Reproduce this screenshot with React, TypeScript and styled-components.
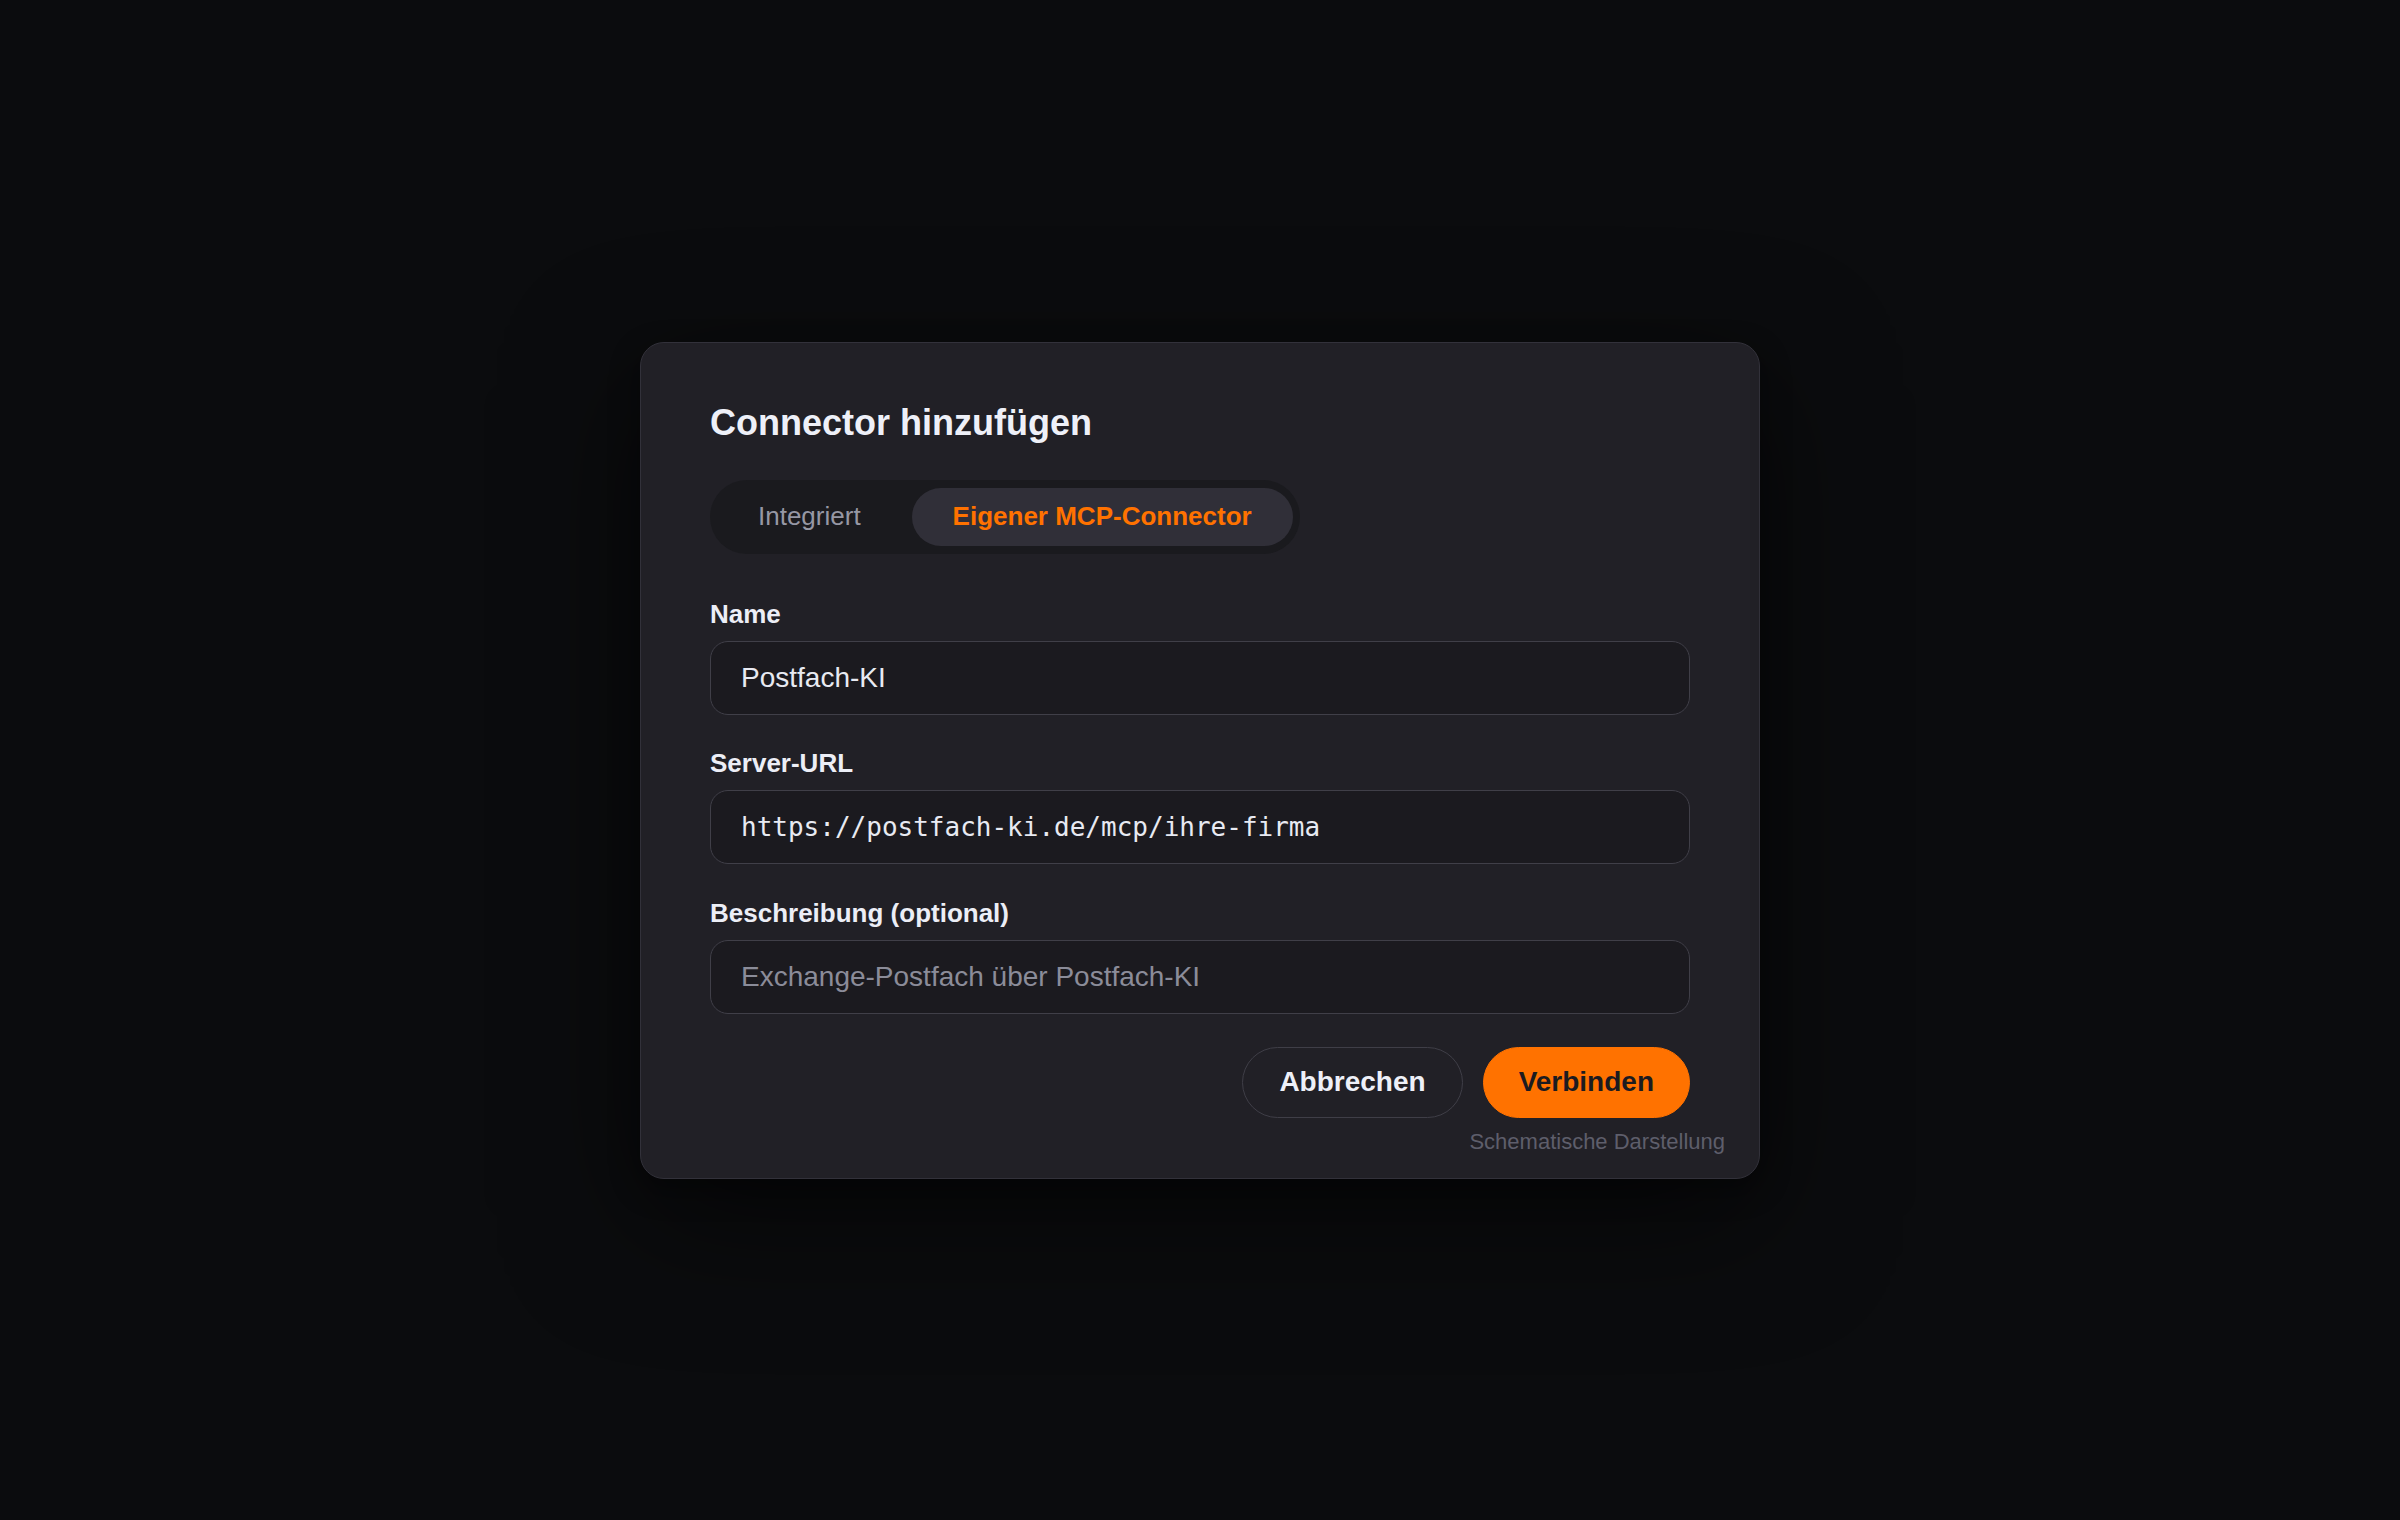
import React from "react";
import styled, { createGlobalStyle } from "styled-components";

const GlobalStyle = createGlobalStyle`
  html, body {
    margin: 0;
    padding: 0;
    background: #0b0c0e;
  }
  * { box-sizing: border-box; }
`;

const Page = styled.main`
  min-height: 100vh;
  display: flex;
  align-items: center;
  justify-content: center;
  background: #0b0c0e;
  font-family: "Liberation Sans", Arial, sans-serif;
`;

const Dialog = styled.section`
  position: relative;
  width: 1120px;
  padding: 58px 69px 60px;
  background: #212026;
  border: 1px solid #32313a;
  border-radius: 24px;
  box-shadow: 0 40px 130px rgba(0, 0, 0, 0.55), 0 10px 30px rgba(0, 0, 0, 0.35);
  display: flex;
  flex-direction: column;
`;

const Title = styled.h2`
  margin: 0;
  font-size: 36px;
  line-height: 44px;
  font-weight: 700;
  color: #eef0f8;
`;

const Tabs = styled.div`
  margin-top: 35px;
  align-self: flex-start;
  display: flex;
  gap: 10px;
  padding: 8px 7px;
  background: #1a1a1e;
  border-radius: 999px;
`;

const Tab = styled.button<{ $active?: boolean }>`
  height: 58px;
  padding: 0 41px;
  border: none;
  border-radius: 999px;
  font-family: inherit;
  font-size: 26px;
  font-weight: ${(p) => (p.$active ? 700 : 400)};
  color: ${(p) => (p.$active ? "#ff7200" : "#9697a4")};
  background: ${(p) => (p.$active ? "#302f38" : "transparent")};
  cursor: pointer;
`;

const Form = styled.div`
  margin-top: 45px;
  display: flex;
  flex-direction: column;
  gap: 33.5px;
`;

const Field = styled.label`
  display: flex;
  flex-direction: column;
  gap: 12px;
`;

const LabelText = styled.span`
  font-size: 26px;
  line-height: 30px;
  font-weight: 700;
  color: #eceef6;
`;

const Input = styled.input<{ $mono?: boolean }>`
  width: 100%;
  height: 74px;
  padding: 0 30px;
  background: #1b1a1f;
  border: 1px solid #403f48;
  border-radius: 18px;
  outline: none;
  color: #e8eaf2;
  font-family: ${(p) =>
    p.$mono ? '"DejaVu Sans Mono", "Liberation Mono", monospace' : '"Liberation Sans", Arial, sans-serif'};
  font-size: ${(p) => (p.$mono ? "26px" : "28px")};

  &::placeholder {
    color: #8b8c99;
    opacity: 1;
  }
`;

const Actions = styled.div`
  margin-top: 33px;
  display: flex;
  justify-content: flex-end;
  gap: 20px;
`;

const Button = styled.button<{ $primary?: boolean }>`
  height: 71px;
  padding: 0 ${(p) => (p.$primary ? "35px" : "36px")};
  border-radius: 999px;
  border: 1px solid ${(p) => (p.$primary ? "#ff7200" : "#3f3e47")};
  background: ${(p) => (p.$primary ? "#ff7200" : "transparent")};
  color: ${(p) => (p.$primary ? "#1c1b20" : "#eef0f8")};
  font-family: inherit;
  font-size: 28px;
  font-weight: 700;
  cursor: pointer;
`;

const Note = styled.span`
  position: absolute;
  right: 34px;
  bottom: 24px;
  font-size: 22px;
  line-height: 24px;
  color: #5e5e6b;
`;

export default function App() {
  return (
    <>
      <GlobalStyle />
      <Page>
        <Dialog>
          <Title>Connector hinzufügen</Title>
          <Tabs>
            <Tab>Integriert</Tab>
            <Tab $active>Eigener MCP-Connector</Tab>
          </Tabs>
          <Form>
            <Field>
              <LabelText>Name</LabelText>
              <Input readOnly defaultValue="Postfach-KI" />
            </Field>
            <Field>
              <LabelText>Server-URL</LabelText>
              <Input $mono readOnly defaultValue="https://postfach-ki.de/mcp/ihre-firma" />
            </Field>
            <Field>
              <LabelText>Beschreibung (optional)</LabelText>
              <Input readOnly placeholder="Exchange-Postfach über Postfach-KI" />
            </Field>
          </Form>
          <Actions>
            <Button>Abbrechen</Button>
            <Button $primary>Verbinden</Button>
          </Actions>
          <Note>Schematische Darstellung</Note>
        </Dialog>
      </Page>
    </>
  );
}
